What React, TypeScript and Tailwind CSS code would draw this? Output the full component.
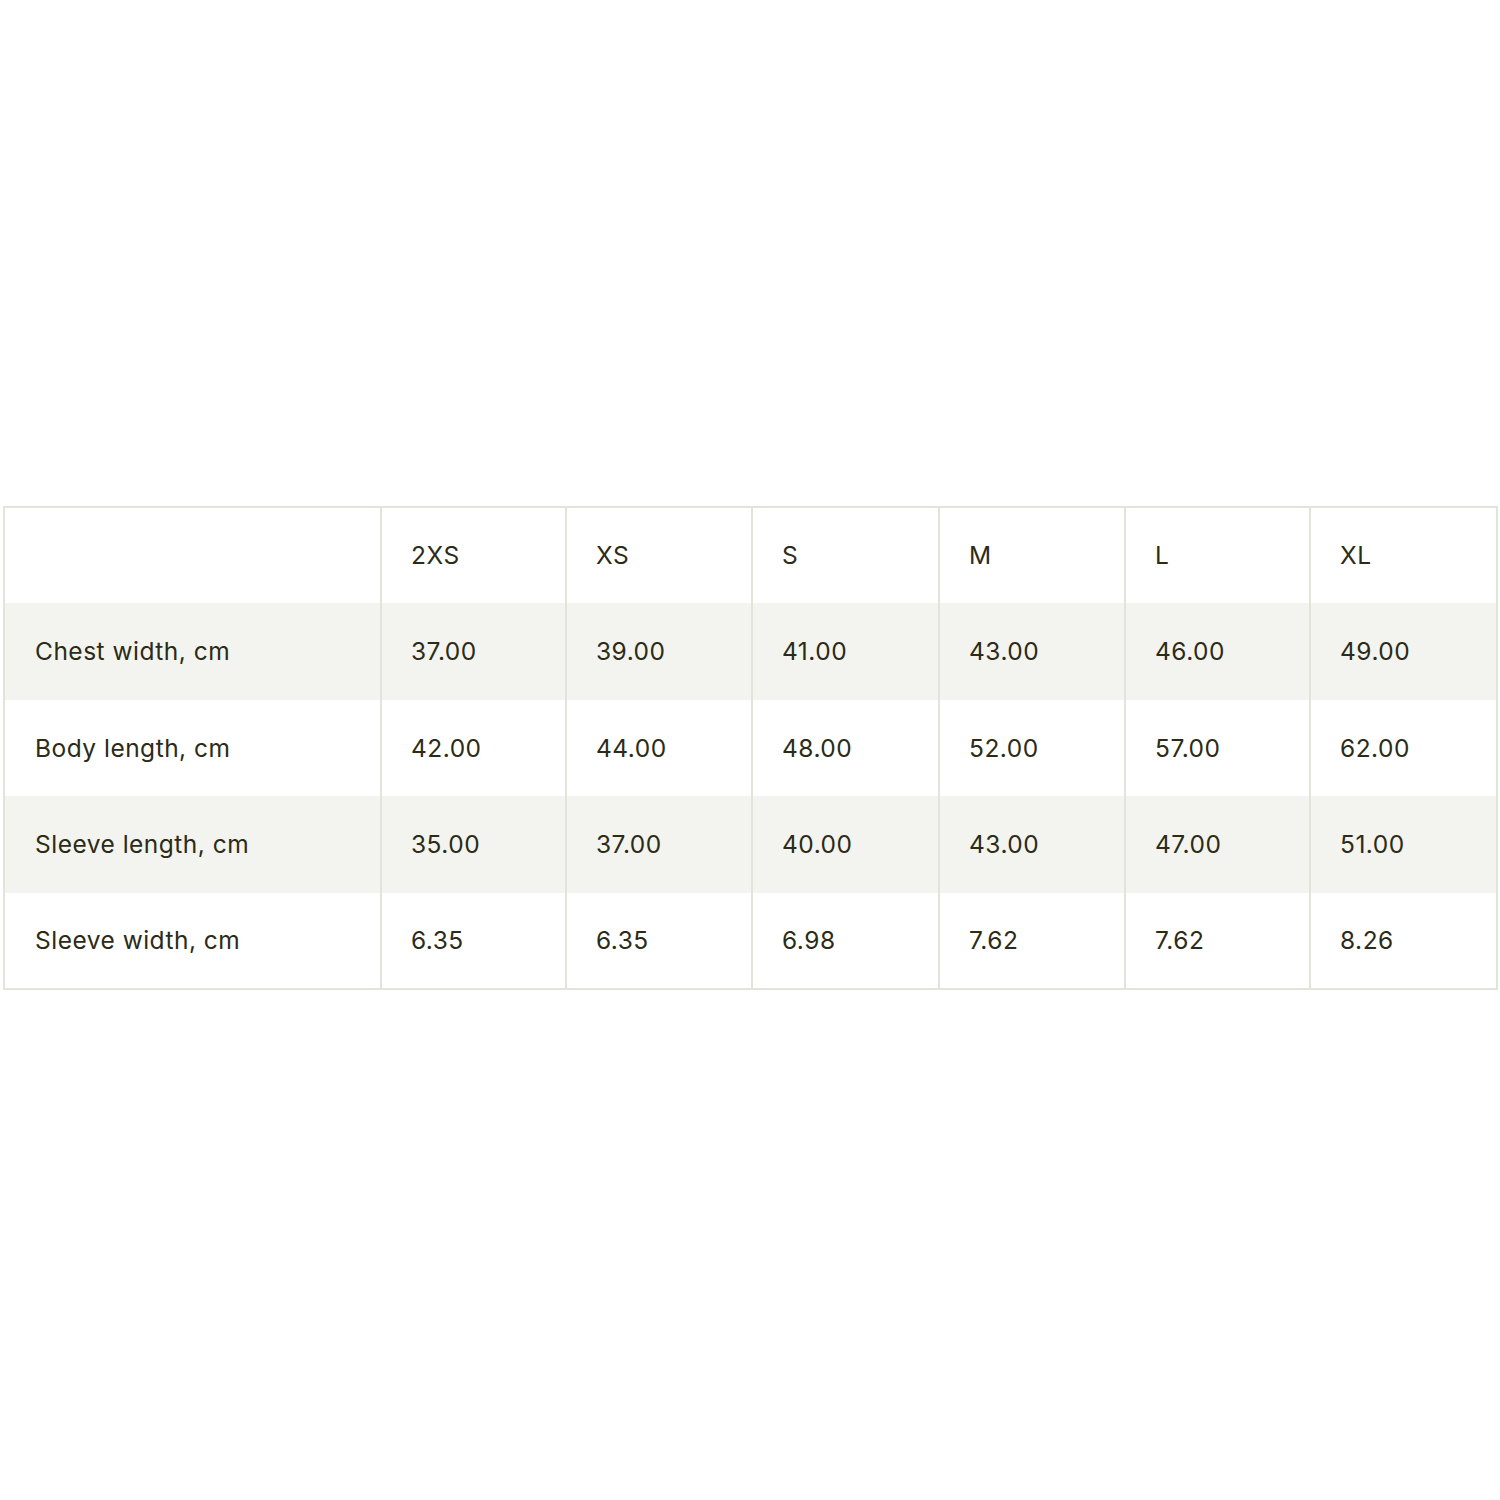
const sizes = ["2XS", "XS", "S", "M", "L", "XL"];

const rows = [
  { label: "Chest width, cm", values: ["37.00", "39.00", "41.00", "43.00", "46.00", "49.00"] },
  { label: "Body length, cm", values: ["42.00", "44.00", "48.00", "52.00", "57.00", "62.00"] },
  { label: "Sleeve length, cm", values: ["35.00", "37.00", "40.00", "43.00", "47.00", "51.00"] },
  { label: "Sleeve width, cm", values: ["6.35", "6.35", "6.98", "7.62", "7.62", "8.26"] },
];

export default function App() {
  return (
    <div className="w-[1500px] h-[1500px] bg-white flex items-center" style={{ fontFamily: "Inter, 'Liberation Sans', sans-serif" }}>
      <table className="ml-[3px] w-[1493px] mt-[-4px] border-collapse border-2 border-[#e3e3dc] text-[24.5px] tracking-[0.02em] text-[#2b2b17] table-fixed">
        <colgroup>
          <col className="w-[377px]" />
          <col className="w-[185px]" />
          <col className="w-[186px]" />
          <col className="w-[187px]" />
          <col className="w-[186px]" />
          <col className="w-[185px]" />
          <col className="w-[187px]" />
        </colgroup>
        <thead>
          <tr className="h-[96.5px] bg-white">
            <th className="border-r-2 border-[#e3e3dc]" />
            {sizes.map((s) => (
              <th key={s} className="border-r-2 border-[#e3e3dc] pl-[29px] text-left font-normal">
                {s}
              </th>
            ))}
          </tr>
        </thead>
        <tbody>
          {rows.map((row, i) => (
            <tr key={row.label} className={`h-[96.5px] ${i % 2 === 0 ? "bg-[#f3f4ef]" : "bg-white"}`}>
              <td className="border-r-2 border-[#e3e3dc] pl-[30px]">{row.label}</td>
              {row.values.map((v, j) => (
                <td key={j} className="border-r-2 border-[#e3e3dc] pl-[29px]">
                  {v}
                </td>
              ))}
            </tr>
          ))}
        </tbody>
      </table>
    </div>
  );
}
